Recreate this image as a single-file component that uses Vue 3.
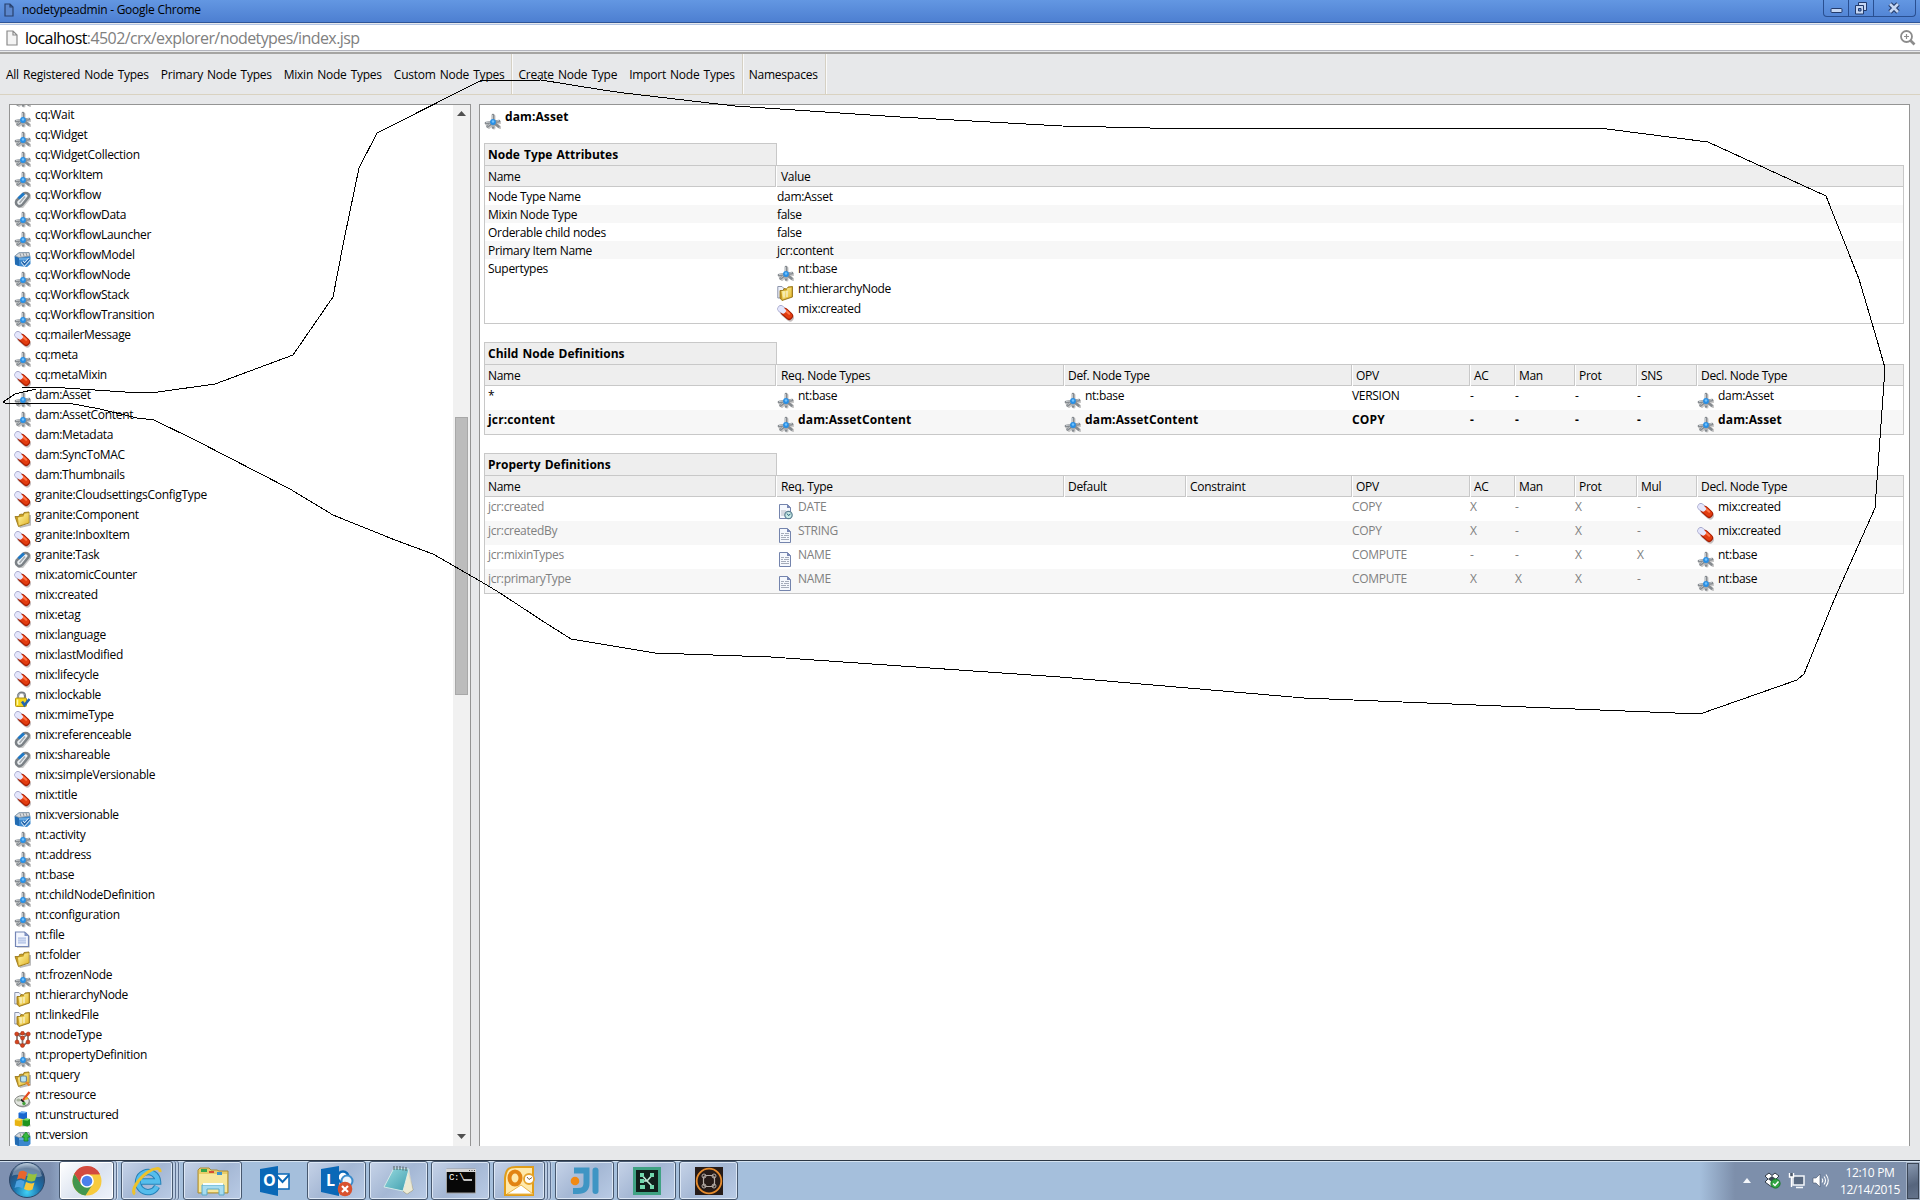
<template>
  <div class="window">
    <svg class="defs" width="0" height="0">
      <linearGradient id="gold" x1="0" y1="0" x2="1" y2="1">
        <stop offset="0" stop-color="#fff9a8" />
        <stop offset="1" stop-color="#e3b52c" />
      </linearGradient>
      <linearGradient id="teal" x1="0" y1="0" x2="1" y2="1">
        <stop offset="0" stop-color="#9adbe0" />
        <stop offset="1" stop-color="#3f9eae" />
      </linearGradient>
      <radialGradient id="orb" cx="0.5" cy="0.85" r="0.85">
        <stop offset="0" stop-color="#3fd0f5" />
        <stop offset="0.45" stop-color="#1a6ea8" />
        <stop offset="0.8" stop-color="#2c4f78" />
        <stop offset="1" stop-color="#a9c0d6" />
      </radialGradient>

      <symbol id="node" viewBox="0 0 17 17">
        <path d="M10 3v12M3 11.500l13-2M5 14.500l5-5 6 5" stroke="#c8c8c8" stroke-width="3" fill="none" stroke-linecap="round" />
        <path d="M9 2v12.500M2 10l13-1.800M3.500 13.500l5.500-4.500 5.500 4.500" stroke="#868b90" stroke-width="2.700" fill="none" stroke-linecap="round" />
        <path d="M8.500 2v5M2 9.600l4-.6M3.500 13l3-2.500M12.500 8l2.500-.4M9 12v2" stroke="#c3c8cc" stroke-width="1" fill="none" />
        <circle cx="9" cy="9" r="2.900" fill="#2a90e6" />
        <circle cx="9" cy="8.500" r="1.200" fill="#6fc2ff" />
      </symbol>
      <symbol id="pill" viewBox="0 0 17 17">
        <path d="M7 7.500l6 5.200" stroke="#c4bdbd" stroke-width="7.600" stroke-linecap="round" />
        <path d="M4 3.900l4 3.400" stroke="#a3a5cb" stroke-width="7.200" stroke-linecap="round" />
        <path d="M4 3.900l4 3.400" stroke="#e4e6fc" stroke-width="5.600" stroke-linecap="round" />
        <path d="M7.800 7l4.300 3.900" stroke="#a81e02" stroke-width="8" stroke-linecap="round" />
        <path d="M7.800 6.800l4.200 3.800" stroke="#e23c10" stroke-width="6" stroke-linecap="round" />
        <path d="M8.800 5.800l3.400 3" stroke="#ff7648" stroke-width="2" stroke-linecap="round" />
        <path d="M3.900 3.900l2.300 1.900" stroke="#e4e6fc" stroke-width="5.400" stroke-linecap="round" />
      </symbol>
      <symbol id="clip" viewBox="0 0 17 17">
        <path d="M6 13.500l7-8.500" stroke="#cccccc" stroke-width="7.500" stroke-linecap="round" transform="translate(.6 .7)" />
        <path d="M2.500 9.500L9 3C11 1 16 2 14.500 6L8.500 13.500C5.500 17 .5 14 2.500 9.500Z" fill="#eef1f3" stroke="#7b8186" stroke-width="2.500" />
        <path d="M5.500 12l5.500-6.500" stroke="#a4aaaf" stroke-width="1.800" />
        <path d="M4.500 7.500l5.500-5" stroke="#1c79c9" stroke-width="3" />
      </symbol>
      <symbol id="box" viewBox="0 0 17 17">
        <path d="M.5 5L5 1.500 15 1l1.500 5v7L13 16 4 15 1 13.500Z" fill="#3b87ce" />
        <path d="M1 5L5 1.800 15 1.500 15.800 5 5 6.500Z" fill="#d7dadd" stroke="#8d959c" stroke-width=".8" />
        <path d="M6 2.500l1 3M9 2l1 3M12 2l1 3" stroke="#7c858d" stroke-width=".8" />
        <path d="M1 5.500l4 1.500v8L1 13Z" fill="#226bb2" />
        <path d="M5 8h10" stroke="#8dc6f2" />
      </symbol>
      <symbol id="versionable" viewBox="0 0 17 17">
        <use href="#box" width="17" height="17" />
        <path d="M8 10.500l2.500 3L15.500 8" fill="none" stroke="#e8f5ff" stroke-width="3.200" />
        <path d="M8 10.500l2.500 3L15.500 8" fill="none" stroke="#1c5fa8" stroke-width="1.600" />
      </symbol>
      <symbol id="version" viewBox="0 0 17 17">
        <use href="#box" width="17" height="17" />
        <path d="M8 6l4-5 4 5h-2v4h-4V6Z" fill="#35b840" stroke="#12841e" stroke-width=".8" />
      </symbol>
      <symbol id="folder" viewBox="0 0 17 17">
        <path d="M5 15.500L15.500 13V3.500" stroke="#bcbcbc" stroke-width="2" fill="none" transform="translate(.6 .6)" />
        <path d="M1 5.500h4l.5-2 3-.5.500 1 1-2.500 5-.5V12L4.500 15.500Z" fill="#c99d22" stroke="#9b7a1d" stroke-width=".9" />
        <path d="M4 6.500l5.500-1 1-2.800 4.200-.6V11.500L4.800 14.500Z" fill="url(#gold)" />
      </symbol>
      <symbol id="hierarchy" viewBox="0 0 17 17">
        <path d="M.8 1.500H5l2 2V13H.8Z" fill="#eef1fa" stroke="#8c95ab" />
        <path d="M3 5.500h3l1-2 3 .5 1-2 4.500-.5V12L5 15.500 3 13Z" fill="#c99d22" stroke="#96751a" stroke-width=".9" />
        <path d="M4.500 6l5-.5 1-2.500 4-.5V11.500L5.500 14.500Z" fill="url(#gold)" />
        <path d="M7 6.500v6M10 6v6" stroke="#f7f3d5" stroke-width="1.200" />
      </symbol>
      <symbol id="query" viewBox="0 0 17 17">
        <use href="#folder" width="17" height="17" />
        <rect x="6.500" y="5" width="6" height="6" rx="1.500" fill="#b9e4f4" stroke="#6d8795" stroke-width="1.200" />
        <path d="M12 11l3.500 3.500" stroke="#e38230" stroke-width="2.400" />
      </symbol>
      <symbol id="lock" viewBox="0 0 17 17">
        <path d="M4 8V5C4 .500 11 .500 11 5v3" fill="none" stroke="#777d84" stroke-width="2.200" />
        <path d="M4 7.500V5.500C4 2 9 1.500 10.500 4" fill="none" stroke="#c9ced2" stroke-width=".8" />
        <rect x="1.500" y="7" width="11" height="8.500" rx="1" fill="#f2d51c" stroke="#b39317" />
        <path d="M3.500 8.500v5.500" stroke="#fff8a5" stroke-width="1.500" />
        <path d="M8 10.500l2.500 3.500L15.500 8" fill="none" stroke="#2264b0" stroke-width="2.600" />
      </symbol>
      <symbol id="file" viewBox="0 0 17 17">
        <path d="M3 1.500h9l3.500 3.500v11.500H3Z" fill="#a8a8a8" />
        <path d="M1.500 1h9l4 3.800V15.500h-13Z" fill="#f3f6fd" stroke="#7385b5" stroke-width="1.200" />
        <path d="M10.500 1v4h4Z" fill="#7f92c2" />
        <path d="M4 6h8v7H4Z" fill="#cdd8f0" />
        <path d="M4 7.500h8M4 9.500h8M4 11.500h8" stroke="#b6c5e5" stroke-width=".7" />
      </symbol>
      <symbol id="text" viewBox="0 0 17 17">
        <path d="M2.500 1.500h8l3 3V15.500h-11Z" fill="#f5f8fd" stroke="#7484ad" />
        <path d="M10 1v4h4Z" fill="#7887b4" />
        <path d="M4 6.500h3m1 0h4M4 8.500h2m1 0h5M4 10.500h5m1 0h2M4 12.500h8" stroke="#a5acba" />
      </symbol>
      <symbol id="date" viewBox="0 0 17 17">
        <path d="M2.500 1.500h8l3 3V15.500h-11Z" fill="#f5f8fd" stroke="#7484ad" />
        <path d="M10 1v4h4Z" fill="#7887b4" />
        <path d="M4 7h5v6H4Z" fill="#d6dae1" />
        <circle cx="11.500" cy="12" r="3.700" fill="#c9e9e5" stroke="#5b7f91" stroke-width="1.200" />
        <path d="M10 10.500l1.500 2 2-1.500" fill="none" stroke="#205a76" />
      </symbol>
      <symbol id="nodetype" viewBox="0 0 17 17">
        <path d="M3 3h11v8l-5.500 4L3 11ZM3 3l5.500 4L14 3M8.500 7v8" fill="none" stroke="#8a7670" stroke-width="1.800" />
        <g fill="#d5451f" stroke="#9c2b10" stroke-width=".5">
          <circle cx="2.700" cy="3" r="2" /><circle cx="8.500" cy="2.200" r="1.900" /><circle cx="14.300" cy="3" r="2" />
          <circle cx="8.500" cy="7" r="2" /><circle cx="3" cy="11" r="2" /><circle cx="14" cy="11" r="2" /><circle cx="8.500" cy="14.500" r="2" />
        </g>
      </symbol>
      <symbol id="palette" viewBox="0 0 17 17">
        <ellipse cx="9" cy="11.500" rx="7.500" ry="5" fill="#a9a9a9" />
        <ellipse cx="8" cy="10" rx="7.300" ry="5.300" fill="#e3e6e0" stroke="#7f827d" />
        <ellipse cx="4.500" cy="9" rx="2.200" ry="1.500" fill="#aab5a1" />
        <path d="M7 8.500l3 2.500" stroke="#222" stroke-width="2" />
        <circle cx="10" cy="12.500" r="1.700" fill="#45a33b" />
        <path d="M9 9L15.500 1" stroke="#e2491f" stroke-width="2.200" />
        <path d="M11 8l3-1" stroke="#e8b12a" stroke-width="2" />
      </symbol>
      <symbol id="cubes" viewBox="0 0 17 17">
        <path d="M4 13.500h12.500v2H5Z" fill="#bdbdbd" />
        <path d="M4.500 2l3-1.500 5.500.5V7L10 8.500 4.500 7.500Z" fill="#1866cf" />
        <path d="M4.500 2l3-1.500 5.500.5-3 1.500Z" fill="#6fb2f7" />
        <path d="M.8 9l3-1.500 4.700.5v6L6 15.500.8 14.500Z" fill="#e8b414" />
        <path d="M.8 9l3-1.500 4.700.5L6 9.700Z" fill="#ffe56a" />
        <path d="M8.500 9l3-1.500 4.500.5v6l-2.500 1.500-5-1Z" fill="#1f9420" />
        <path d="M8.500 9l3-1.500 4.500.5-2.500 1.700Z" fill="#72da5a" />
      </symbol>
    </svg>

    <header class="titlebar">
      <svg class="page-icon" width="10" height="14" viewBox="0 0 10 14">
        <path d="M1 1h5l3 3v9H1ZM6 1v3h3" fill="#5c87cd" stroke="#28416d" stroke-width="1.200" />
      </svg>
      <span class="window-title">nodetypeadmin - Google Chrome</span>
      <div class="controls">
        <span class="control">
          <svg width="25" height="16" viewBox="0 0 25 16"><rect x="7" y="8.500" width="11" height="4" rx="1" fill="#c5d7f4" stroke="#233b6b" /></svg>
        </span>
        <span class="control">
          <svg width="25" height="16" viewBox="0 0 25 16">
            <path d="M9.500 2.500h8v8h-8Z" fill="#c5d7f4" stroke="#233b6b" />
            <path d="M6.500 5.500h8v8.500h-8Z" fill="#c5d7f4" stroke="#233b6b" />
            <path d="M9.500 8.500h2.500v2.500H9.500Z" fill="#5b8bd5" stroke="#233b6b" />
          </svg>
        </span>
        <span class="control close">
          <svg width="40" height="16" viewBox="0 0 40 16">
            <path d="M16 4l8 8M24 4l-8 8" stroke="#233b6b" stroke-width="4.800" />
            <path d="M16 4l8 8M24 4l-8 8" stroke="#c5d7f4" stroke-width="2.600" />
          </svg>
        </span>
      </div>
    </header>

    <div class="address">
      <svg class="address-page" width="12" height="16" viewBox="0 0 12 16">
        <path d="M1 1h6l4 4v10H1ZM7 1v4h4" fill="#f4f4f4" stroke="#8a8a8a" stroke-width="1.200" />
      </svg>
      <span class="url">localhost<span class="path">:4502/crx/explorer/nodetypes/index.jsp</span></span>
      <svg class="magnifier" width="16" height="16" viewBox="0 0 16 16" fill="none" stroke="#8c8c8c">
        <circle cx="6.500" cy="6.500" r="5.500" stroke-width="1.800" />
        <path d="M10.500 10.500l4 4" stroke-width="2.600" />
        <path d="M4 6.500h5M6.500 4v5" stroke-width="1.200" />
      </svg>
    </div>

    <nav class="toolbar">
      <div v-for="(group, i) in menu" :key="i" class="menu-group">
        <a v-for="entry in group" :key="entry">{{ entry }}</a>
      </div>
    </nav>

    <main class="panels">
      <aside class="tree">
        <div class="tree-list">
          <div v-for="item in nodeTypes" :key="item.name" class="node-item">
            <svg class="icon"><use :href="'#' + item.icon" /></svg>
            <span>{{ item.name }}</span>
          </div>
        </div>
        <div class="scrollbar">
          <svg width="9" height="5" viewBox="0 0 9 5"><path d="M0 5L4.500 0 9 5Z" fill="#505050" /></svg>
          <div class="thumb"></div>
          <svg class="arrow-down" width="9" height="5" viewBox="0 0 9 5"><path d="M0 0L4.500 5 9 0Z" fill="#505050" /></svg>
        </div>
      </aside>

      <section class="details">
        <div class="node-item heading">
          <svg class="icon"><use href="#node" /></svg>
          <span>dam:Asset</span>
        </div>

        <div v-for="table in tables" :key="table.title" class="definition" :class="table.kind">
          <h2>{{ table.title }}</h2>
          <div class="grid-row head">
            <span v-for="col in table.columns" :key="col">{{ col }}</span>
          </div>
          <div class="body">
            <div v-for="(row, r) in table.rows" :key="r" class="grid-row" :class="row.style">
              <div v-for="(cell, c) in row.cells" :key="c" class="cell">
                <template v-if="Array.isArray(cell)">
                  <div v-for="item in cell" :key="item.name" class="node-item">
                    <svg class="icon"><use :href="'#' + item.icon" /></svg>
                    <span :class="{ link: c === row.cells.length - 1 }">{{ item.name }}</span>
                  </div>
                </template>
                <template v-else>{{ cell }}</template>
              </div>
            </div>
          </div>
        </div>
      </section>
    </main>

    <footer class="taskbar">
      <div class="start">
        <svg width="38" height="38" viewBox="0 0 38 38">
          <circle cx="19" cy="19" r="17.500" fill="url(#orb)" stroke="#2c4667" />
          <path d="M4 15C6 5 15 2 19 2s13 3 15 13C26 19 12 11 4 15Z" fill="#fff" opacity=".3" />
          <path d="M11 11c3-2 5-1.500 8 .5l-2 7.500c-3-2-5-2-8-.5Z" fill="#e8662c" />
          <path d="M20.500 12c3 2 6 1.500 8.500.5L27 19.500c-3 1.500-6 1-8.500-.5Z" fill="#97c23c" />
          <path d="M8.500 20c3-1.500 5-1.500 8 .5l-2 7c-3-2-5-2-8-.5Z" fill="#4da2e0" />
          <path d="M18 21c3 1.500 6 2 8.500.5l-2 7c-3 1.500-6 1-8.500-.5Z" fill="#f8c83a" />
        </svg>
      </div>

      <div class="task active">
        <svg width="32" height="32" viewBox="0 0 32 32">
          <circle cx="16" cy="16" r="14.500" fill="#f7ca3d" />
          <path d="M16 16L3.400 8.800A14.500 14.500 0 0 1 28.800 9.200H16Z" fill="#d34a3e" />
          <path d="M3.400 8.800A14.500 14.500 0 0 0 14.500 30.400L21.500 19.500 11 20Z" fill="#42964e" />
          <path d="M3.400 8.800L10 19l5-9.800H28.800A14 14 0 0 0 3.400 8.800Z" fill="#d34a3e" />
          <circle cx="16" cy="16" r="6.800" fill="#fff" />
          <circle cx="16" cy="16" r="5.300" fill="#4b80ec" />
        </svg>
      </div>
      <div class="task stack one">
        <svg width="32" height="32" viewBox="0 0 32 32" fill="none">
          <path d="M26 21.500A10 10 0 1 1 27 16.500H10" stroke="#2582b8" stroke-width="6.400" />
          <path d="M26 21.500A10 10 0 1 1 27 16.500H10" stroke="#55bdec" stroke-width="4.400" />
          <path d="M4 29C-1 26 8 13 17 7c6-4 13-5 12 0" stroke="#eec22b" stroke-width="3" />
        </svg>
      </div>
      <div class="task wide">
        <svg width="34" height="32" viewBox="0 0 34 32">
          <path d="M2 5l2-2h9l2 2h6l2 1h9v22H2Z" fill="#e9cd69" stroke="#a98c36" />
          <path d="M3 9h28v18H3Z" fill="#f7e79b" />
          <path d="M5 4h6v3H5Z" fill="#35a64a" /><path d="M13 6h5v2h-5Z" fill="#d74d33" /><path d="M21 7h5v3h-5Z" fill="#3d94ce" />
          <path d="M6 30V20h22v10h-5v-6H11v6Z" fill="#a7dcf0" stroke="#5aa9c9" />
          <path d="M7 19h20" stroke="#f5feff" stroke-width="2" />
        </svg>
      </div>
      <div class="task flat">
        <svg width="32" height="32" viewBox="0 0 32 32">
          <path d="M17 9h13v15H17Z" fill="#fff" stroke="#0a68b7" stroke-width="1.500" />
          <path d="M17 10l6.500 7L30 10" fill="none" stroke="#0a68b7" stroke-width="2" />
          <path d="M1 4L19 1v30L1 27Z" fill="#0a68b7" />
          <text x="4" y="21" class="glyph">O</text>
        </svg>
      </div>
      <div class="task wide">
        <svg width="34" height="32" viewBox="0 0 34 32">
          <circle cx="23" cy="12" r="5.500" fill="#fff" stroke="#0a68b7" stroke-width="2.500" />
          <circle cx="27" cy="16" r="5.500" fill="#e9f3fb" stroke="#3a8ccc" stroke-width="2" />
          <path d="M1 4L19 1v30L1 27Z" fill="#0a68b7" />
          <text x="6" y="21" class="glyph">L</text>
          <circle cx="25" cy="24" r="7.300" fill="#d9512e" />
          <path d="M22 21l6 6M28 21l-6 6" stroke="#fff" stroke-width="2.200" />
        </svg>
      </div>
      <div class="task wide">
        <svg width="34" height="32" viewBox="0 0 34 32">
          <path d="M26 5l5 20-6 4-4-3Z" fill="#e2d7a4" stroke="#8f8a67" stroke-width=".8" />
          <path d="M12 3l15 1-6 22-19-4Z" fill="url(#teal)" stroke="#d3e9e8" />
          <path d="M21 26l6-22 4 21-6 4Z" fill="#f1f2e8" opacity=".7" />
          <path d="M12 1v4M15 1v4M18 1v4M21 1.500v4M24 2v4" stroke="#58666a" stroke-width="1.100" />
        </svg>
      </div>
      <div class="task wide">
        <svg width="32" height="30" viewBox="0 0 32 30">
          <path d="M1.500 3h29v24h-29Z" fill="#070707" stroke="#9d9d9d" />
          <path d="M1 3h30v3H1Z" fill="#d5d5d5" />
          <path d="M24 4.500h1M26.500 4.500h1M29 4.500h1" stroke="#444" />
          <text x="4" y="14" class="prompt">C:\</text>
          <path d="M18.500 14h8.500" stroke="#fff" stroke-width="1.500" />
        </svg>
      </div>
      <div class="task stack two">
        <svg width="32" height="32" viewBox="0 0 32 32">
          <path d="M2 13C3 5 5 2 13 2h17v28H2Z" fill="#ffe9ab" stroke="#e09d19" stroke-width="2" />
          <path d="M4 29l14-9 12 9Z" fill="#fff" stroke="#ecb64a" />
          <ellipse cx="12" cy="13" rx="5.500" ry="6.500" fill="none" stroke="#e28413" stroke-width="4" />
          <circle cx="26" cy="14" r="5" fill="#fff" stroke="#e5a32c" stroke-width="1.800" />
          <path d="M24 12l2 2.500 3-2" fill="none" stroke="#7d6540" />
        </svg>
      </div>
      <div class="task wide">
        <svg width="32" height="32" viewBox="0 0 32 32" fill="none" stroke="#3e95c4" stroke-width="6">
          <path d="M5 5.500h12.500v12.500c0 6-3 8-9 8H4" />
          <path d="M26.500 5.500v20.500" stroke-linecap="round" />
          <circle cx="6" cy="16" r="4.300" fill="#f18a14" stroke="none" />
        </svg>
      </div>
      <div class="task wide">
        <svg width="32" height="32" viewBox="0 0 32 32">
          <rect x="3.500" y="3.500" width="25" height="25" fill="#101f1b" stroke="#3fa283" stroke-width="3" />
          <path d="M16 16L10 9M16 16l6-7M16 16H9M16 16l5 5" stroke="#bfe9d6" stroke-width="1.600" />
          <path d="M9 8h4v4H9ZM19 8h4v4h-4ZM9 14h4v4H9ZM9 20h5v4H9ZM19 20h4v4h-4Z" fill="#72d7ad" />
        </svg>
      </div>
      <div class="task wide">
        <svg width="30" height="30" viewBox="0 0 30 30" fill="none">
          <path d="M1 1h28v28H1Z" fill="#261b18" />
          <circle cx="15" cy="15" r="12.300" stroke="#e58b2e" stroke-width="1.800" />
          <rect x="9.500" y="9.500" width="11" height="11" rx="3" stroke="#b5aca6" stroke-width="1.200" />
          <circle cx="10" cy="10" r="2" stroke="#b5aca6" /><circle cx="20" cy="10" r="2" stroke="#b5aca6" />
          <circle cx="10" cy="20" r="2" stroke="#b5aca6" /><circle cx="20" cy="20" r="2" stroke="#b5aca6" />
        </svg>
      </div>

      <div class="tray">
        <svg width="8" height="5" viewBox="0 0 8 5"><path d="M0 5L4 0l4 5Z" fill="#f4f7fb" /></svg>
        <svg class="dropbox" width="17" height="17" viewBox="0 0 17 17">
          <path d="M1 4l4-3 3 2.500L11 1l4 3-3 3 3 3-4 3-3 2-3-2-4-3 3-3Z" fill="#fff" stroke="#303a46" />
          <path d="M4 7l4-3 4 3-4 3Z" fill="#3b4653" />
          <circle cx="11.500" cy="11.500" r="4.600" fill="#31a643" stroke="#1a792a" />
          <path d="M9 11.500l2 2 3.500-4" stroke="#fff" stroke-width="1.500" fill="none" />
        </svg>
        <svg width="17" height="17" viewBox="0 0 17 17">
          <path d="M5 4h11v9H5ZM8 15.500h7" fill="#596980" stroke="#f4f7fb" stroke-width="1.500" />
          <path d="M1.500 1v4h4V1M3.500 5v10" fill="#4c5a6d" stroke="#fff" stroke-width="1.400" />
        </svg>
        <svg width="17" height="17" viewBox="0 0 17 17">
          <path d="M1 6h3l4-4v13l-4-4H1Z" fill="#fff" stroke="#48566c" stroke-width=".6" />
          <path d="M10 6.500q1.500 2 0 4M12 4.500q3 4 0 8M14 2.500q4.500 6 0 12" fill="none" stroke="#fff" stroke-width="1.100" />
        </svg>
        <div class="clock">
          <span>12:10 PM</span>
          <span>12/14/2015</span>
        </div>
        <div class="show-desktop"></div>
      </div>
    </footer>

    <svg class="annotation" width="1920" height="1200" viewBox="0 0 1920 1200">
      <polyline :points="outline" />
    </svg>
  </div>
</template>

<script setup>
const menu = [
  ['All Registered Node Types', 'Primary Node Types', 'Mixin Node Types', 'Custom Node Types'],
  ['Create Node Type', 'Import Node Types'],
  ['Namespaces']
]

const icons = {
  'cq:Workflow': 'clip',
  'cq:WorkflowModel': 'versionable',
  'cq:mailerMessage': 'pill',
  'cq:metaMixin': 'pill',
  'dam:Metadata': 'pill',
  'dam:SyncToMAC': 'pill',
  'dam:Thumbnails': 'pill',
  'granite:CloudsettingsConfigType': 'pill',
  'granite:Component': 'folder',
  'granite:InboxItem': 'pill',
  'granite:Task': 'clip',
  'mix:lockable': 'lock',
  'mix:referenceable': 'clip',
  'mix:shareable': 'clip',
  'mix:versionable': 'versionable',
  'nt:file': 'file',
  'nt:folder': 'folder',
  'nt:hierarchyNode': 'hierarchy',
  'nt:linkedFile': 'hierarchy',
  'nt:nodeType': 'nodetype',
  'nt:query': 'query',
  'nt:resource': 'palette',
  'nt:unstructured': 'cubes',
  'nt:version': 'version'
}

const node = (name) => ({
  name,
  icon: icons[name] || (name.startsWith('mix:') ? 'pill' : 'node')
})

const expand = (prefix, names) => names.split(' ').map((name) => node(prefix + ':' + name))

// The first entry is scrolled out, only the bottom of its icon is left
const nodeTypes = [
  node(''),
  ...expand('cq', 'Wait Widget WidgetCollection WorkItem Workflow WorkflowData WorkflowLauncher WorkflowModel WorkflowNode WorkflowStack WorkflowTransition mailerMessage meta metaMixin'),
  ...expand('dam', 'Asset AssetContent Metadata SyncToMAC Thumbnails'),
  ...expand('granite', 'CloudsettingsConfigType Component InboxItem Task'),
  ...expand('mix', 'atomicCounter created etag language lastModified lifecycle lockable mimeType referenceable shareable simpleVersionable title versionable'),
  ...expand('nt', 'activity address base childNodeDefinition configuration file folder frozenNode hierarchyNode linkedFile nodeType propertyDefinition query resource unstructured version')
]

const type = (name, icon = 'text') => [{ name, icon }]

const tables = [
  {
    title: 'Node Type Attributes',
    kind: 'attributes',
    columns: ['Name', 'Value'],
    rows: [
      { cells: ['Node Type Name', 'dam:Asset'] },
      { cells: ['Mixin Node Type', 'false'] },
      { cells: ['Orderable child nodes', 'false'] },
      { cells: ['Primary Item Name', 'jcr:content'] },
      { cells: ['Supertypes', [node('nt:base'), node('nt:hierarchyNode'), node('mix:created')]] }
    ]
  },
  {
    title: 'Child Node Definitions',
    kind: 'children',
    columns: ['Name', 'Req. Node Types', 'Def. Node Type', 'OPV', 'AC', 'Man', 'Prot', 'SNS', 'Decl. Node Type'],
    rows: [
      { cells: ['*', [node('nt:base')], [node('nt:base')], 'VERSION', '-', '-', '-', '-', [node('dam:Asset')]] },
      { style: 'own', cells: ['jcr:content', [node('dam:AssetContent')], [node('dam:AssetContent')], 'COPY', '-', '-', '-', '-', [node('dam:Asset')]] }
    ]
  },
  {
    title: 'Property Definitions',
    kind: 'properties',
    columns: ['Name', 'Req. Type', 'Default', 'Constraint', 'OPV', 'AC', 'Man', 'Prot', 'Mul', 'Decl. Node Type'],
    rows: [
      { style: 'inherited', cells: ['jcr:created', type('DATE', 'date'), '', '', 'COPY', 'X', '-', 'X', '-', [node('mix:created')]] },
      { style: 'inherited', cells: ['jcr:createdBy', type('STRING'), '', '', 'COPY', 'X', '-', 'X', '-', [node('mix:created')]] },
      { style: 'inherited', cells: ['jcr:mixinTypes', type('NAME'), '', '', 'COMPUTE', '-', '-', 'X', 'X', [node('nt:base')]] },
      { style: 'inherited', cells: ['jcr:primaryType', type('NAME'), '', '', 'COMPUTE', 'X', 'X', 'X', '-', [node('nt:base')]] }
    ]
  }
]

// Freehand line around the dam:Asset entry and its details
const outline = [
  '22,387 50,387 80,389 125,392 158,392 215,384 293,355 333,297 344,240 359,168 377,133 480,81',
  '541,80 603,90 624,93 735,106 900,117 1062,126 1150,128 1480,128 1607,129 1708,142 1826,196',
  '1859,279 1877,340 1885,368 1875,508 1834,600 1804,674 1797,680 1700,714 1550,708 1304,698',
  '1060,677 771,657 655,653 571,639 541,620 500,593 480,581 433,554 395,540 333,515 290,489',
  '195,440 154,420 137,418 100,409 68,403 5,403 3,402 15,394 36,389'
].join(' ')
</script>

<style>
body {
  margin: 0;
  overflow: hidden;
}
</style>

<style scoped>
.window {
  position: relative;
  display: flex;
  flex-direction: column;
  width: 1920px;
  height: 1200px;
  overflow: hidden;
  background: #e7e8ea;
  color: #000;
  font-family: "Open Sans", "Noto Sans", sans-serif;
  font-size: 12px;
  letter-spacing: -0.3px;
  white-space: pre;
}

.window svg {
  flex: none;
}

.defs {
  position: absolute;
}

.titlebar {
  display: flex;
  align-items: flex-start;
  height: 22px;
  border-bottom: 1px solid #2f5597;
  background: linear-gradient(#6397e2, #4d7fd1);
}

.page-icon {
  margin: 3px 0 0 4px;
}

.window-title {
  margin-left: 8px;
  line-height: 20px;
  letter-spacing: -0.25px;
}

.controls {
  display: flex;
  margin: 0 4px 0 auto;
  border: 1px solid #294f91;
  border-top: 0;
  border-radius: 0 0 4px 4px;
}

.control {
  width: 25px;
  height: 16px;
  box-sizing: border-box;
  border-right: 1px solid #294f91;
}

.control.close {
  width: 41px;
  border: 0;
}

.address {
  display: flex;
  align-items: center;
  height: 25px;
  margin-top: 1px;
  border-top: 1px solid #b3c5e4;
  border-bottom: 1px solid #b4b5bf;
  background: #fff;
}

.address-page {
  margin-left: 6px;
}

.url {
  margin-left: 7px;
  font-size: 16px;
  letter-spacing: -0.58px;
}

.url .path {
  color: #808080;
}

.magnifier {
  margin: 0 4px 0 auto;
}

.toolbar {
  display: flex;
  height: 40px;
  margin-top: 1px;
  border-top: 2px solid #a5a4a2;
  border-bottom: 1px solid #d9d2c1;
  line-height: 42px;
  letter-spacing: -0.25px;
  word-spacing: 1.3px;
}

.menu-group {
  display: flex;
  gap: 12px;
  padding: 0 7px 0 6px;
  border-right: 1px solid #d5d0c4;
  box-shadow: 1px 0 #fafafa;
}

.panels {
  display: flex;
  gap: 8px;
  height: 1042px;
  padding: 9px 10px 14px 9px;
}

.tree {
  display: flex;
  width: 460px;
  border: 1px solid #949494;
  border-bottom: 0;
  background: #fff;
}

.tree-list {
  flex: 1;
  padding-left: 4px;
  overflow: hidden;
}

.tree-list .node-item:first-child {
  margin-top: -20px;
}

.node-item {
  display: flex;
  gap: 4px;
  height: 20px;
  line-height: 20px;
}

.icon {
  width: 17px;
  height: 17px;
  margin-top: 6px;
}

.scrollbar {
  display: flex;
  flex-direction: column;
  align-items: center;
  width: 17px;
  padding: 6px 0 7px;
  box-sizing: border-box;
  background: #f1f1f1;
}

.thumb {
  width: 11px;
  height: 276px;
  margin-top: 301px;
  border: 1px solid #a8a8a8;
  background: #bcbcbc;
}

.arrow-down {
  margin-top: auto;
}

.details {
  flex: 1;
  padding: 2px 5px 0 4px;
  border: 1px solid #949494;
  border-bottom: 0;
  background: #fff;
}

.heading {
  margin-bottom: 16px;
  font-weight: 700;
  letter-spacing: 0.1px;
}

.definition {
  margin-bottom: 18px;
}

h2 {
  width: 288px;
  height: 21px;
  margin: 0;
  padding-left: 3px;
  border: 1px solid #c8c8c8;
  border-bottom: 0;
  background: #eee;
  font-size: 12px;
  line-height: 21px;
  letter-spacing: 0;
  word-spacing: 1px;
}

.grid-row {
  display: grid;
}

.attributes .grid-row {
  grid-template-columns: 292px 1fr;
}

.children .grid-row {
  grid-template-columns: 292px 287px 288px 118px 45px 60px 62px 60px 1fr;
}

.properties .grid-row {
  grid-template-columns: 292px 287px 122px 166px 118px 45px 60px 62px 60px 1fr;
}

.head {
  height: 20px;
  border: 1px solid #c8c8c8;
  background: #eee;
  line-height: 21px;
}

.head span {
  padding-left: 4px;
  border-right: 1px solid #c8c8c8;
  box-shadow: 1px 0 #fff;
}

.head span:first-child {
  margin-right: 1px;
  padding-left: 3px;
}

.head span:last-child {
  border: 0;
  box-shadow: none;
}

.body {
  border: 1px solid #c8c8c8;
  border-top: 0;
}

.body .grid-row {
  min-height: 24px;
  line-height: 20px;
}

.attributes .body .grid-row {
  height: 18px;
  min-height: 0;
  line-height: 19px;
}

.attributes .body .grid-row:last-child {
  height: 64px;
}

.body .grid-row:nth-child(even) {
  background: #f7f7f7;
}

.cell:first-child {
  padding-left: 3px;
}

.own {
  font-weight: 700;
  letter-spacing: 0.15px;
}

.inherited {
  color: #808080;
}

.inherited .link {
  color: #000;
}

.taskbar {
  display: flex;
  height: 39px;
  border-top: 1px solid #2b3644;
  box-shadow: inset 0 1px #d4e2f0;
  background: linear-gradient(90deg, #7f91b1 0, #7f91b1 50px, #a5bfdc 75px, #a5bfdc 1700px, #7d8fab 1735px, #7d8fab 1920px);
}

.start {
  width: 59px;
  padding-left: 8px;
  box-sizing: border-box;
}

.task {
  position: relative;
  display: flex;
  align-items: center;
  justify-content: center;
  box-sizing: border-box;
  width: 59px;
  height: 39px;
  margin-right: 3px;
  border: 1px solid #47586f;
  border-radius: 3px;
  background: linear-gradient(135deg, #c6d3e8, #a4b7d4 50%, #b9cbe5);
  box-shadow: inset 0 0 0 1px #dce7f5;
}

.task.active {
  width: 55px;
  margin-right: 7px;
  background: linear-gradient(135deg, #fff, #dbe3f0 55%, #eef3fb);
  box-shadow: inset 0 0 0 1px #fff, 2px 0 #b9cbe2, 3px 0 #5e7190, 4px 0 #d6e2f1;
}

.task.stack {
  width: 52px;
  margin-right: 10px;
  box-shadow: inset 0 0 0 1px #dce7f5, 2px 0 #b9cbe2, 3px 0 #5e7190, 5px 0 #b9cbe2, 6px 0 #5e7190, 7px 0 #b9cbe2;
}

.task.flat {
  border-color: transparent;
  background: none;
  box-shadow: none;
}

.glyph {
  fill: #fff;
  font-size: 16px;
  font-weight: 700;
}

.prompt {
  fill: #fff;
  font-family: "Liberation Mono", monospace;
  font-size: 9px;
}

.tray {
  display: flex;
  align-items: center;
  height: 39px;
  margin-left: auto;
  gap: 7px;
}

.dropbox {
  margin-left: 6px;
}

.clock {
  display: flex;
  flex-direction: column;
  align-items: center;
  width: 58px;
  margin: 0 0 0 5px;
  color: #fff;
  line-height: 17px;
  letter-spacing: -0.35px;
}

.show-desktop {
  width: 12px;
  height: 36px;
  border: 1px solid #a5b3c7;
  outline: 1px solid #3b4656;
  outline-offset: -2px;
  background: linear-gradient(160deg, #8a9ab2, #56657d 60%, #66758d);
}

.annotation {
  position: absolute;
  top: 0;
  left: 0;
  pointer-events: none;
}

.annotation polyline {
  fill: none;
  stroke: #000;
  stroke-width: 1;
  shape-rendering: crispEdges;
}
</style>
